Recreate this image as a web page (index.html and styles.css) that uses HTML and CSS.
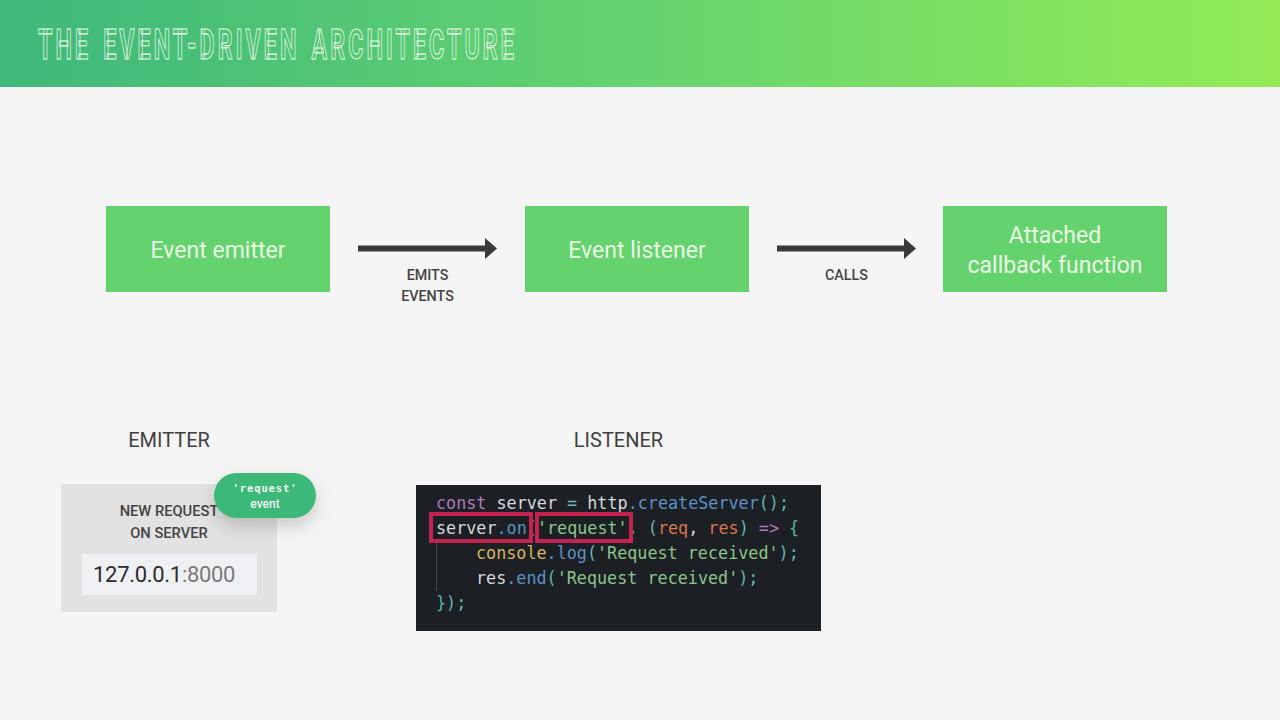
FILE: index.html
```html
<!DOCTYPE html>
<html lang="en">
<head>
<meta charset="utf-8">
<title>The Event-Driven Architecture</title>
<link rel="stylesheet" href="styles.css">
</head>
<body>
<header class="header"><h1 class="title">THE EVENT-DRIVEN ARCHITECTURE</h1></header>
<main class="main">
  <section class="flow">
    <div class="box">Event emitter</div>
    <div class="link">
      <svg class="arrow" width="139" height="21" viewBox="0 0 139 21"><path d="M0 7.5H127V0L139 10.5L127 21V13.5H0Z" fill="#3a3a3a"/></svg>
      <p class="link-label">EMITS<br>EVENTS</p>
    </div>
    <div class="box">Event listener</div>
    <div class="link link-narrow">
      <svg class="arrow" width="139" height="21" viewBox="0 0 139 21"><path d="M0 7.5H127V0L139 10.5L127 21V13.5H0Z" fill="#3a3a3a"/></svg>
      <p class="link-label">CALLS</p>
    </div>
    <div class="box">Attached<br>callback function</div>
  </section>
  <section class="detail">
    <div class="emitter">
      <h2 class="heading">EMITTER</h2>
      <div class="panel">
        <p class="panel-text">NEW REQUEST<br>ON SERVER</p>
        <div class="address">127.0.0.1<span class="port">:8000</span></div>
        <div class="bubble"><span class="bubble-code">'request'</span><span>event</span></div>
      </div>
    </div>
    <div class="listener">
      <h2 class="heading">LISTENER</h2>
<pre class="code"><span class="kw">const</span> server <span class="op">=</span> http<span class="fn">.createServer</span><span class="pn">();</span>
<span class="hl hl-call">server<span class="fn">.on</span></span><span class="pn">(</span><span class="hl hl-arg"><span class="st">'request'</span></span><span class="pn">,</span> <span class="pn">(</span><span class="pa">req</span>, <span class="pa">res</span><span class="pn">)</span> <span class="kw">=&gt;</span> <span class="cy">{</span>
<span class="block"><span class="yl">console</span><span class="fn">.log</span><span class="pn">(</span><span class="st">'Request received'</span><span class="pn">);</span>
res<span class="fn">.end</span><span class="pn">(</span><span class="st">'Request received'</span><span class="pn">);</span></span><span class="cy">}</span><span class="pn">);</span></pre>
    </div>
  </section>
</main>
</body>
</html>
```
FILE: styles.css
```css
* { box-sizing: border-box; }
html, body { margin: 0; height: 100%; }
body { width: 1280px; height: 720px; overflow: hidden; background: #f5f5f5; font-family: Roboto, "Liberation Sans", sans-serif; color: #444; }

.header { height: 87px; padding-left: 38px; display: flex; align-items: center; background: linear-gradient(90deg, #3eb87b 0%, #65d36f 50%, #93ec55 100%); }
.title { margin: 0; font-family: Roboto, "Liberation Sans", sans-serif; font-weight: 700; font-size: 43px; line-height: 44px; letter-spacing: 5.7px; word-spacing: 6px; color: transparent; -webkit-text-stroke: 1.1px #eefaea; transform: scaleX(0.54); transform-origin: left center; white-space: nowrap; }

.main { display: flex; flex-direction: column; }

.flow { display: grid; grid-template-columns: 224px 195px 224px 194px 224px; grid-template-rows: 86px; margin: 119px 0 0 106px; }
.box { display: flex; align-items: center; justify-content: center; padding-top: 4px; text-align: center; background: #65d36d; color: #e9fae5; font-size: 23px; font-weight: 400; line-height: 30px; }
.link { display: flex; flex-direction: column; align-items: center; padding: 32px 28px 0; }
.link-narrow { padding-right: 27px; }
.arrow { display: block; flex: none; }
.link-label { margin: 6px 0 0; font-size: 14.3px; font-weight: 500; line-height: 21px; text-align: center; color: #444; }

.detail { display: flex; margin-top: 138px; padding-left: 61px; }
.emitter { width: 216px; display: flex; flex-direction: column; }
.listener { width: 405px; margin-left: 139px; display: flex; flex-direction: column; }
.heading { margin: 0 0 33px; font-size: 20px; font-weight: 400; line-height: 21px; text-align: center; color: #3f3f3f; }

.panel { position: relative; width: 216px; height: 128px; background: #e2e2e2; padding: 16px 21px 0; }
.panel-text { margin: 0; font-size: 14.7px; font-weight: 500; line-height: 22px; text-align: center; color: #444; }
.address { margin-top: 10px; height: 41px; width: 175px; display: flex; align-items: center; padding-left: 11px; background: #eff0f3; font-size: 22px; font-weight: 400; letter-spacing: -.3px; color: #2c2c2c; }
.port { color: #7a7a7a; }
.bubble { position: absolute; left: 153px; top: -11px; width: 102px; height: 45px; display: flex; flex-direction: column; align-items: center; justify-content: center; border-radius: 23px; background: #3cb878; color: #eef8ee; font-size: 12px; font-weight: 500; line-height: 16px; box-shadow: 0 8px 18px rgba(0, 0, 0, .18); }
.bubble-code { font-family: "DejaVu Sans Mono", monospace; font-size: 10.5px; font-weight: 700; letter-spacing: .9px; }

.code { margin: 1px 0 0; height: 146px; padding: 6px 0 0 20px; background: #1c1f24; color: #d5d9dd; font-family: "DejaVu Sans Mono", monospace; font-size: 16.75px; line-height: 25px; white-space: pre; }
.block { display: block; padding-left: 39px; border-left: 1px solid #3f4a4d; }
.kw { color: #b07ab8; }
.op { color: #6fb3b8; }
.fn { color: #5a93c4; }
.pn { color: #5fb8b0; }
.pa { color: #d9754a; }
.st { color: #8ac68a; }
.yl { color: #d8b45c; }
.cy { color: #4fb8a8; }
.hl { position: relative; }
.hl::after { content: ""; position: absolute; top: -6px; bottom: -5px; border: 4px solid #c4234f; }
.hl-call::after { left: -7px; right: -6px; }
.hl-arg::after { left: -2px; right: -5px; }
```
